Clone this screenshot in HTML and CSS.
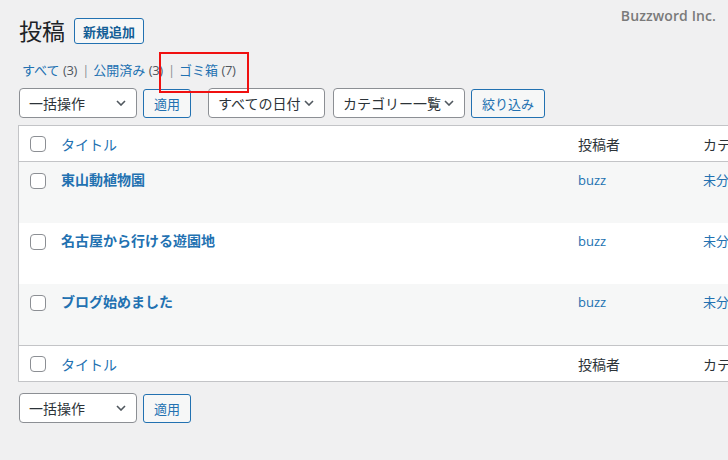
FILE: index.html
```html
<!DOCTYPE html>
<html lang="ja">
<head>
<meta charset="utf-8">
<title>投稿</title>
<link rel="stylesheet" href="styles.css">
</head>
<body>
<div class="page">
  <div class="brand">Buzzword Inc.</div>
  <div class="wrap">
    <div class="heading">
      <h1 class="page-title">投稿</h1>
      <a class="btn btn-add" href="#">新規追加</a>
    </div>
    <ul class="subsubsub">
      <li><a href="#">すべて <span class="count">(3)</span></a><span class="sep">|</span></li>
      <li><a href="#">公開済み <span class="count">(3)</span></a><span class="sep">|</span></li>
      <li><a href="#">ゴミ箱 <span class="count">(7)</span></a></li>
    </ul>
    <div class="tablenav tablenav-top">
      <div class="select sel-bulk"><span>一括操作</span><svg class="chev" width="10" height="6" viewBox="0 0 10 6"><path d="M1 1l4 4 4-4" fill="none" stroke="#50575e" stroke-width="1.6"/></svg></div>
      <a class="btn btn-apply" href="#">適用</a>
      <div class="select sel-date"><span>すべての日付</span><svg class="chev" width="10" height="6" viewBox="0 0 10 6"><path d="M1 1l4 4 4-4" fill="none" stroke="#50575e" stroke-width="1.6"/></svg></div>
      <div class="select sel-cat"><span>カテゴリー一覧</span><svg class="chev" width="10" height="6" viewBox="0 0 10 6"><path d="M1 1l4 4 4-4" fill="none" stroke="#50575e" stroke-width="1.6"/></svg></div>
      <a class="btn btn-filter" href="#">絞り込み</a>
    </div>
    <div class="list">
      <div class="lrow lhead">
        <div class="c-check"><span class="cb"></span></div>
        <div class="c-title"><a href="#" class="sort-link">タイトル</a></div>
        <div class="c-author">投稿者</div>
        <div class="c-cat">カテゴリー</div>
      </div>
      <div class="lrow item alt">
        <div class="c-check"><span class="cb"></span></div>
        <div class="c-title"><a href="#" class="row-title">東山動植物園</a></div>
        <div class="c-author"><a href="#">buzz</a></div>
        <div class="c-cat"><a href="#">未分類</a></div>
      </div>
      <div class="lrow item">
        <div class="c-check"><span class="cb"></span></div>
        <div class="c-title"><a href="#" class="row-title">名古屋から行ける遊園地</a></div>
        <div class="c-author"><a href="#">buzz</a></div>
        <div class="c-cat"><a href="#">未分類</a></div>
      </div>
      <div class="lrow item alt">
        <div class="c-check"><span class="cb"></span></div>
        <div class="c-title"><a href="#" class="row-title">ブログ始めました</a></div>
        <div class="c-author"><a href="#">buzz</a></div>
        <div class="c-cat"><a href="#">未分類</a></div>
      </div>
      <div class="lrow lfoot">
        <div class="c-check"><span class="cb"></span></div>
        <div class="c-title"><a href="#" class="sort-link">タイトル</a></div>
        <div class="c-author">投稿者</div>
        <div class="c-cat">カテゴリー</div>
      </div>
    </div>
    <div class="tablenav tablenav-bottom">
      <div class="select sel-bulk"><span>一括操作</span><svg class="chev" width="10" height="6" viewBox="0 0 10 6"><path d="M1 1l4 4 4-4" fill="none" stroke="#50575e" stroke-width="1.6"/></svg></div>
      <a class="btn btn-apply" href="#">適用</a>
    </div>
  </div>
  <div class="highlight"></div>
</div>
</body>
</html>
```
FILE: styles.css
```css
html, body {
  margin: 0;
  padding: 0;
  overflow: hidden;
}
body {
  background: #f0f0f1;
  color: #3c434a;
  font-family: "Open Sans", "Noto Sans CJK JP", sans-serif;
  font-size: 13px;
  width: 728px;
  height: 460px;
}
a {
  color: #2271b1;
  text-decoration: none;
}
.page {
  position: relative;
  width: 728px;
  height: 460px;
  overflow: hidden;
}
.brand {
  position: absolute;
  top: 6px;
  right: 12px;
  font-family: "Open Sans", sans-serif;
  font-weight: 600;
  font-size: 14px;
  color: #7a7a7a;
  letter-spacing: 0.1px;
}
.highlight {
  position: absolute;
  left: 159px;
  top: 52px;
  width: 86px;
  height: 37px;
  border: 2px solid #f01010;
}
.wrap {
  padding: 18px 0 0 19px;
}
.heading {
  display: flex;
  align-items: center;
  height: 26px;
}
.page-title {
  margin: 0 9px 0 0;
  font-size: 23px;
  font-weight: 400;
  line-height: 26px;
  color: #1d2327;
}
.btn {
  display: inline-flex;
  align-items: center;
  justify-content: center;
  box-sizing: border-box;
  border: 1px solid #2271b1;
  border-radius: 3px;
  background: #f6f7f7;
  color: #2271b1;
  font-size: 13px;
  padding: 0 10px;
  white-space: nowrap;
}
.btn-add {
  height: 26px;
  padding: 0 8px;
  font-weight: 700;
  color: #135e96;
}
.subsubsub {
  list-style: none;
  margin: 13px 0 0 0;
  padding: 0 0 0 3px;
  line-height: 26px;
  font-size: 13px;
  display: flex;
  color: #646970;
}
.subsubsub li {
  white-space: nowrap;
}
.subsubsub .count {
  color: #50575e;
  letter-spacing: -0.3px;
}
.subsubsub .sep {
  color: #8c8f94;
  margin: 0 4px 0 5px;
}
.tablenav {
  display: flex;
  align-items: center;
  height: 30px;
}
.tablenav-top {
  margin-top: 5px;
}
.tablenav-bottom {
  margin-top: 11px;
}
.select {
  box-sizing: border-box;
  height: 30px;
  display: flex;
  align-items: center;
  justify-content: space-between;
  border: 1px solid #8c8f94;
  border-radius: 4px;
  background: #fff;
  color: #2c3338;
  font-size: 14px;
  padding: 0 10px 0 9px;
  white-space: nowrap;
}
.chev {
  flex: none;
  display: block;
}
.sel-bulk {
  width: 118px;
}
.sel-date {
  width: 117px;
  margin-left: 17px;
}
.sel-cat {
  width: 132px;
  margin-left: 8px;
}
.btn-apply {
  height: 29px;
  margin-left: 6px;
}
.btn-filter {
  height: 29px;
  margin-left: 6px;
}
.list {
  margin: 7px 0 0 -1px;
  width: 900px;
  background: #fff;
  border: 1px solid #c3c4c7;
}
.lrow {
  display: grid;
  grid-template-columns: 32px 517px 125px 1fr;
}
.lhead, .lfoot {
  height: 35px;
  align-items: center;
  font-size: 14px;
  color: #2c3338;
}
.lhead {
  border-bottom: 1px solid #c3c4c7;
}
.lfoot {
  border-top: 1px solid #c3c4c7;
}
.item {
  height: 61px;
  align-items: start;
}
.item.alt {
  background: #f6f7f7;
}
.c-check {
  padding-left: 11px;
}
.item .c-check {
  padding-top: 11px;
}
.cb {
  display: block;
  box-sizing: border-box;
  width: 16px;
  height: 16px;
  border: 1px solid #8c8f94;
  border-radius: 4px;
  background: #fff;
}
.c-title, .c-author, .c-cat {
  padding-left: 10px;
  white-space: nowrap;
}
.sort-link {
  font-size: 14px;
}
.item .c-title {
  padding-top: 8px;
  line-height: 20px;
}
.row-title {
  font-size: 14px;
  font-weight: 700;
}
.item .c-author, .item .c-cat {
  padding-top: 9px;
  line-height: 19px;
  font-size: 13px;
}
```
